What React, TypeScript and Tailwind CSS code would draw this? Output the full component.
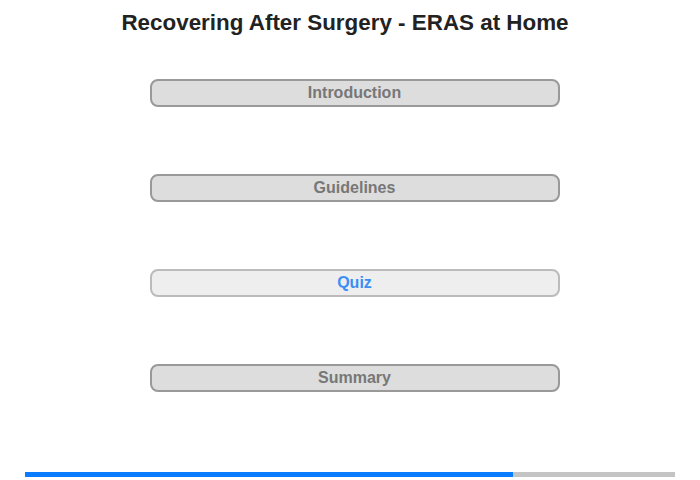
const sections = [
  { label: "Introduction", active: false },
  { label: "Guidelines", active: false },
  { label: "Quiz", active: true },
  { label: "Summary", active: false },
];

export default function App() {
  return (
    <div className="w-[700px] h-[480px] bg-white font-['Liberation_Sans',Arial,sans-serif] flex flex-col">
      <h1 className="text-[22.4px] leading-[26px] font-bold text-[#222] text-center pt-[10px] pr-[10px]">
        Recovering After Surgery - ERAS at Home
      </h1>
      <div className="flex flex-col items-center gap-[67px] mt-[43px] pl-[9px]">
        {sections.map((s) => (
          <button
            key={s.label}
            className={
              s.active
                ? "w-[410px] h-[28px] rounded-[8px] border-2 border-[#bbbbbb] bg-[#eeeeee] text-[#3b8ff3] font-bold text-[16px] leading-none"
                : "w-[410px] h-[28px] rounded-[8px] border-2 border-[#999999] bg-[#dddddd] text-[#777777] font-bold text-[16px] leading-none"
            }
          >
            {s.label}
          </button>
        ))}
      </div>
      <div className="mt-auto mb-[3px] mx-[25px] h-[5px] bg-[#c4c4c4] flex">
        <div className="w-[488px] h-full bg-[#0a7cff]" />
      </div>
    </div>
  );
}
